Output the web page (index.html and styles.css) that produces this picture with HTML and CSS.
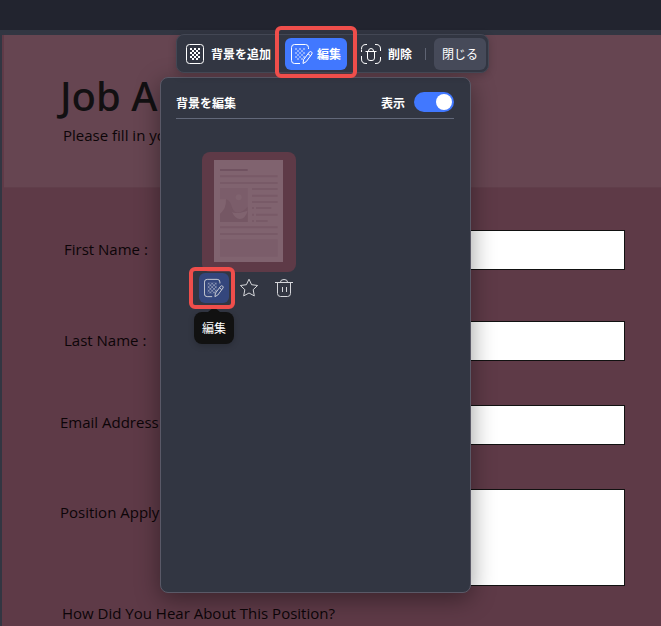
FILE: index.html
```html
<!DOCTYPE html>
<html lang="ja">
<head>
    <meta charset="UTF-8">
    <meta name="viewport" content="width=device-width, initial-scale=1.0">
    <title>背景を編集</title>
    <link rel="stylesheet" href="styles.css">
</head>
<body>
    <svg class="defs" aria-hidden="true">
        <defs>
            <pattern id="checker" x="4" y="4" width="4" height="4" patternUnits="userSpaceOnUse">
                <rect width="2" height="2" fill="currentColor"/>
                <rect x="2" y="2" width="2" height="2" fill="currentColor"/>
            </pattern>
        </defs>
        <symbol id="icon-edit" viewBox="0 0 22 20">
            <rect x="4" y="4" width="10" height="12" fill="url(#checker)" opacity="0.4"/>
            <path d="M17.5 5V3.500Q17.500 0.500 14.500 0.500H3.500Q0.500 0.500 0.500 3.500V16.500Q0.500 19.500 3.500 19.500H9" fill="none" stroke="currentColor"/>
            <path d="M12 19.500L12.600 15.600L18.300 8.100Q19.300 7 20.500 7.900Q21.600 8.900 20.900 10L15.200 17.700ZM17 9.800L19.600 11.800" fill="none" stroke="currentColor" stroke-linejoin="round"/>
        </symbol>
    </svg>

    <div class="topbar"></div>
    <div class="document">
        <header class="form-header">
            <h1>Job A</h1>
            <p>Please fill in your</p>
        </header>
        <form class="form-body">
            <div class="names">
                <div class="row">
                    <label for="firstName">First Name :</label>
                    <input type="text" id="firstName">
                </div>
                <div class="row">
                    <label for="lastName">Last Name :</label>
                    <input type="text" id="lastName">
                </div>
            </div>
            <div class="row">
                <label for="email">Email Address</label>
                <input type="text" id="email">
            </div>
            <div class="row row-large">
                <label for="position">Position Apply</label>
                <textarea id="position"></textarea>
            </div>
        </form>
        <p class="question">How Did You Hear About This Position?</p>
    </div>

    <div class="editor">
        <div class="toolbar">
            <button type="button" class="tool">
                <svg width="18" height="20" viewBox="0 0 18 20">
                    <rect x="0.500" y="0.500" width="17" height="19" rx="3" fill="none" stroke="currentColor"/>
                    <rect x="4" y="4" width="10" height="12" fill="url(#checker)"/>
                </svg>
                背景を追加
            </button>
            <button type="button" class="tool tool-active marked">
                <svg width="22" height="20"><use href="#icon-edit"/></svg>
                編集
            </button>
            <button type="button" class="tool">
                <svg width="20" height="20" viewBox="0 0 20 20" fill="none" stroke="currentColor">
                    <path d="M0.500 8V5.500M0.500 5Q0.500 0.500 5 0.500H6M14 0.500H15Q19.500 0.500 19.500 5V7M19.500 13V15Q19.500 19.500 15 19.500H14M6 19.500H5Q0.500 19.500 0.500 15V12"/>
                    <path d="M4.500 7.500H15.500M6.500 8V14Q6.500 16.500 9 16.500H11Q13.500 16.500 13.500 14V8M7.500 7Q7.500 4.500 10 4.500T12.500 7"/>
                </svg>
                削除
            </button>
            <span class="divider"></span>
            <button type="button" class="btn-close">閉じる</button>
        </div>

        <section class="panel">
            <div class="panel-header">
                <h2>背景を編集</h2>
                <label for="show">表示</label>
                <input type="checkbox" class="switch" id="show" checked>
            </div>
            <div class="card">
                <div class="thumb">
                    <svg width="69" height="102" viewBox="0 0 207 306">
                        <rect width="207" height="306" fill="#80636f"/>
                        <g stroke="#785a67" stroke-width="6">
                            <path d="M18 30H101" stroke="#705260"/>
                            <path d="M18 49H191M18 69H191M114 87H191M114 107H191M114 126H191"/>
                            <path d="M114 144H120M126 144H172M114 164H120M126 164H191M114 183H120M126 183H161"/>
                            <path d="M18 202H191M18 222H191"/>
                        </g>
                        <rect x="18" y="238" width="173" height="52" fill="#7b5d6a"/>
                        <rect x="18" y="84" width="83" height="102" fill="#7b5d6a"/>
                        <circle cx="74" cy="112" r="9" fill="#80636f"/>
                        <path d="M18 118H36Q38 146 18 162Z" fill="#80636f"/>
                        <path d="M18 162Q38 146 36 118Q50 122 54 142Q60 158 70 158Q88 156 101 140V186H18Z" fill="#755764"/>
                        <path d="M54 156Q66 164 101 152Q94 178 76 177Q62 174 54 156Z" fill="#80636f"/>
                    </svg>
                </div>
                <div class="actions">
                    <button type="button" class="action action-active marked" aria-label="編集">
                        <svg width="20" height="20"><use href="#icon-edit"/></svg>
                        <span class="tooltip">編集</span>
                    </button>
                    <button type="button" class="action" aria-label="お気に入り">
                        <svg width="20" height="20" viewBox="0 0 20 20" fill="none" stroke="currentColor" stroke-linejoin="round">
                            <path d="M10 1.200L12.600 6.700L18.600 7.500L14.200 11.700L15.300 17.900L10 15L4.700 17.900L5.800 11.700L1.400 7.500L7.400 6.700Z"/>
                        </svg>
                    </button>
                    <button type="button" class="action" aria-label="削除">
                        <svg width="20" height="20" viewBox="0 0 20 20" fill="none" stroke="currentColor">
                            <path d="M1 4.500H19M3.500 5V15.500Q3.500 18.500 6.500 18.500H13.500Q16.500 18.500 16.500 15.500V5M6.500 4Q6.500 1.500 10 1.500T13.500 4M8.500 9V14M12.500 9V14"/>
                        </svg>
                    </button>
                </div>
            </div>
        </section>
    </div>
</body>
</html>
```
FILE: styles.css
```css
* {
    box-sizing: border-box;
}
body {
    margin: 0;
    min-height: 100vh;
    display: flex;
    flex-direction: column;
    position: relative;
    overflow: hidden;
    background: #323642;
    font-family: "Noto Sans CJK JP", sans-serif;
}
h1, h2, p {
    margin: 0;
}
.defs {
    position: absolute;
    width: 0;
    height: 0;
    color: white;
}
.topbar {
    height: 30px;
    background: #22242f;
}

/* form page behind the editor */
.document {
    flex: 1;
    margin: 5px 0 0 2px;
    background: #5e3a47;
    color: #0c0508;
    font-family: "Open Sans", "Noto Sans", sans-serif;
    font-size: 15px;
}
.form-header {
    height: 153px;
    margin-left: 2px;
    padding: 34px 56px 0;
    background: #664551;
    border-bottom: 1px solid #603e4a;
}
.form-header h1 {
    font-family: "Noto Sans", sans-serif;
    font-size: 40px;
    line-height: 54px;
    font-weight: 500;
    color: #121012;
    white-space: nowrap;
}
.form-header p {
    padding-left: 3px;
    line-height: 24px;
}
.form-body {
    display: flex;
    flex-direction: column;
    gap: 44px;
    padding: 42px 36px 0 58px;
}
.names {
    display: flex;
    flex-direction: column;
    gap: 51px;
    padding-left: 4px;
}
.row {
    display: grid;
    grid-template-columns: 260px 1fr;
    align-items: start;
}
.row label {
    line-height: 34px;
    white-space: nowrap;
}
.names label {
    line-height: 38px;
}
.row input,
.row textarea {
    width: 100%;
    height: 40px;
    display: block;
    background: white;
    border: 1px solid #111;
    border-radius: 0;
    resize: none;
}
.row textarea {
    height: 97px;
}
.row-large label {
    padding-top: 6px;
}
.question {
    padding: 15px 60px 0;
    line-height: 24px;
}

/* floating editor */
.editor {
    position: absolute;
    top: 34px;
    left: 160px;
    width: 311px;
    color: white;
}
.toolbar {
    position: relative;
    z-index: 2;
    display: flex;
    align-items: center;
    width: max-content;
    height: 39px;
    margin: 0 0 4px 16px;
    padding: 0 2px 0 4px;
    background: #323642;
    border: 1px solid #434754;
    border-radius: 8px;
    box-shadow: 0 2px 8px rgba(0, 0, 0, 0.2);
}
button {
    font-family: inherit;
    font-size: 12px;
    color: white;
    background: none;
    border: none;
    cursor: pointer;
}
.tool {
    position: relative;
    display: flex;
    align-items: center;
    gap: 7px;
    height: 32px;
    padding: 0 5px;
    font-weight: 700;
    border-radius: 6px;
    white-space: nowrap;
}
.tool-active {
    gap: 4px;
    margin: 0 9px;
    padding: 0 6px;
    background: #4178ff;
}
.divider {
    width: 1px;
    height: 12px;
    margin: 0 8px;
    background: #5f6473;
}
.btn-close {
    height: 32px;
    padding: 0 8px;
    background: #464a59;
    border-radius: 6px;
}
.marked::after {
    content: "";
    position: absolute;
    inset: -6px -6px -6px -10px;
    border: 4px solid #ef4e4b;
    border-radius: 6px;
}
.tool.marked::after {
    inset: -12px -10px -8px;
}

.panel {
    min-height: 516px;
    padding: 10px 16px;
    background: #323642;
    border: 1px solid #5a5967;
    border-radius: 8px;
    box-shadow: 0 6px 24px rgba(0, 0, 0, 0.4);
}
.panel-header {
    display: flex;
    align-items: center;
    gap: 9px;
    height: 31px;
    margin-left: -1px;
    padding-bottom: 2px;
    border-bottom: 1px solid #626879;
    font-size: 12px;
    font-weight: 700;
}
.panel-header h2 {
    flex: 1;
    font-size: 12px;
}
.switch {
    appearance: none;
    position: relative;
    width: 40px;
    height: 20px;
    margin: 0;
    background: #5f6473;
    border-radius: 10px;
}
.switch:checked {
    background: #4178ff;
}
.switch::before {
    content: "";
    position: absolute;
    top: 2px;
    left: 2px;
    width: 16px;
    height: 16px;
    background: white;
    border-radius: 50%;
}
.switch:checked::before {
    left: 22px;
}
.card {
    width: 94px;
    margin: 33px 0 0 25px;
}
.thumb {
    display: flex;
    height: 120px;
    padding: 8px 12px;
    background: #5e3a47;
    border-radius: 8px;
}
.actions {
    display: flex;
    gap: 5px;
    margin: 1px -3px 0;
}
.action {
    position: relative;
    display: flex;
    align-items: center;
    justify-content: center;
    flex: none;
    width: 30px;
    height: 30px;
    padding: 0;
    color: #d5d6da;
    border-radius: 6px;
}
.action-active {
    background: #34467c;
}
.tooltip {
    position: absolute;
    top: 39px;
    left: -5px;
    width: 40px;
    line-height: 32px;
    background: #111;
    color: white;
    border-radius: 8px;
    box-shadow: 0 2px 6px rgba(0, 0, 0, 0.2);
}
.tooltip::before {
    content: "";
    position: absolute;
    top: -5px;
    left: 14px;
    border: 6px solid transparent;
    border-top: none;
    border-bottom: 5px solid #111;
}
```
